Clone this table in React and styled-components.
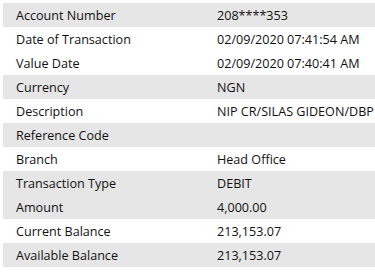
import React from "react";
import styled, { createGlobalStyle } from "styled-components";

const GlobalStyle = createGlobalStyle`
  html, body {
    margin: 0;
    padding: 0;
    background: #ffffff;
  }
  body {
    font-family: "Open Sans", "Liberation Sans", sans-serif;
    color: #111111;
  }
`;

const Table = styled.div`
  display: flex;
  flex-direction: column;
  padding: 3px 0 0 3px;
  width: 375px;
  box-sizing: border-box;
  overflow: hidden;
`;

const Row = styled.div`
  display: grid;
  grid-template-columns: 214px 1fr;
  height: 24px;
  align-items: center;
  background: ${(p) => (p.$shaded ? "#e6e6e6" : "#ffffff")};
`;

const Label = styled.div`
  padding-left: 13px;
  font-size: 12.6px;
  white-space: nowrap;
`;

const Value = styled.div`
  font-size: 12.6px;
  white-space: nowrap;
  overflow: hidden;
`;

const rows = [
  ["Account Number", "208****353", true],
  ["Date of Transaction", "02/09/2020 07:41:54 AM", false],
  ["Value Date", "02/09/2020 07:40:41 AM", false],
  ["Currency", "NGN", true],
  ["Description", "NIP CR/SILAS GIDEON/DBP", false],
  ["Reference Code", "", true],
  ["Branch", "Head Office", false],
  ["Transaction Type", "DEBIT", true],
  ["Amount", "4,000.00", true],
  ["Current Balance", "213,153.07", false],
  ["Available Balance", "213,153.07", true],
];

export default function App() {
  return (
    <>
      <GlobalStyle />
      <Table>
        {rows.map(([label, value, shaded]) => (
          <Row key={label} $shaded={shaded}>
            <Label>{label}</Label>
            <Value>{value}</Value>
          </Row>
        ))}
      </Table>
    </>
  );
}
